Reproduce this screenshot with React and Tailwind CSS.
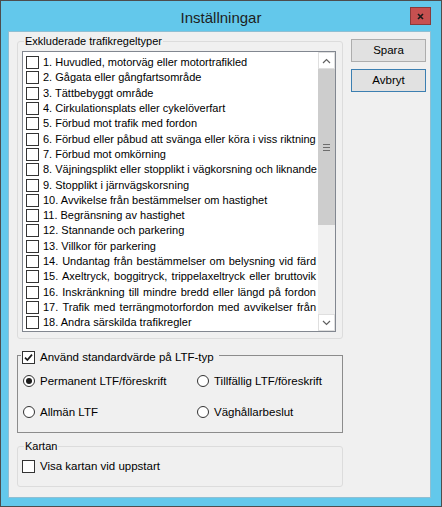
import { Fragment } from "react";

const ruleTypes = [
  { id: 1, text: "1. Huvudled, motorväg eller motortrafikled" },
  { id: 2, text: "2. Gågata eller gångfartsområde" },
  { id: 3, text: "3. Tättbebyggt område" },
  { id: 4, text: "4. Cirkulationsplats eller cykelöverfart" },
  { id: 5, text: "5. Förbud mot trafik med fordon" },
  { id: 6, text: "6. Förbud eller påbud att svänga eller köra i viss riktning" },
  { id: 7, text: "7. Förbud mot omkörning" },
  { id: 8, text: "8. Väjningsplikt eller stopplikt i vägkorsning och liknande" },
  { id: 9, text: "9. Stopplikt i järnvägskorsning" },
  { id: 10, text: "10. Avvikelse från bestämmelser om hastighet" },
  { id: 11, text: "11. Begränsning av hastighet" },
  { id: 12, text: "12. Stannande och parkering" },
  { id: 13, text: "13. Villkor för parkering" },
  { id: 14, text: "14. Undantag från bestämmelser om belysning vid färd", justify: true },
  { id: 15, text: "15. Axeltryck, boggitryck, trippelaxeltryck eller bruttovik", justify: true },
  { id: 16, text: "16. Inskränkning till mindre bredd eller längd på fordon", justify: true },
  { id: 17, text: "17. Trafik med terrängmotorfordon med avvikelser från", justify: true },
  { id: 18, text: "18. Andra särskilda trafikregler" },
];

function CheckBox({ checked = false }) {
  return (
    <span className="flex h-[13px] w-[13px] shrink-0 items-center justify-center border border-[#333333] bg-white">
      {checked && (
        <svg width="9" height="9" viewBox="0 0 9 9">
          <path d="M1 4.6 L3.4 7 L8 1.6" stroke="#1b1b1b" strokeWidth="1.7" fill="none" />
        </svg>
      )}
    </span>
  );
}

function Radio({ checked = false }) {
  return (
    <span className="flex h-[12px] w-[12px] shrink-0 items-center justify-center rounded-full border border-[#333333] bg-white">
      {checked && <span className="h-[6px] w-[6px] rounded-full bg-[#1b1b1b]" />}
    </span>
  );
}

function ScrollBar() {
  return (
    <div className="flex w-[17px] shrink-0 flex-col bg-[#f0f0f0]">
      <div className="flex h-[17px] items-center justify-center border border-[#dfdfdf] bg-white">
        <svg width="9" height="6" viewBox="0 0 9 6">
          <path d="M1 5 L4.5 1.5 L8 5" stroke="#606060" strokeWidth="1.2" fill="none" />
        </svg>
      </div>
      <div className="flex h-[156px] flex-col items-center justify-center gap-[2px] bg-[#cdcdcd]">
        <span className="h-px w-[7px] bg-[#6d6d6d]" />
        <span className="h-px w-[7px] bg-[#6d6d6d]" />
        <span className="h-px w-[7px] bg-[#6d6d6d]" />
      </div>
      <div className="flex-1" />
      <div className="flex h-[17px] items-center justify-center border border-[#dfdfdf] bg-white">
        <svg width="9" height="6" viewBox="0 0 9 6">
          <path d="M1 1 L4.5 4.5 L8 1" stroke="#606060" strokeWidth="1.2" fill="none" />
        </svg>
      </div>
    </div>
  );
}

function RuleList() {
  return (
    <div className="flex h-[281px] w-[314px] border border-[#828790] bg-white">
      <div className="flex-1 overflow-hidden pt-[3px]">
        {ruleTypes.map((rule) => (
          <div key={rule.id} className="flex h-[15.3px] items-center gap-[4px] overflow-hidden pl-[3px]">
            <CheckBox />
            {rule.justify ? (
              <span className="flex-1 overflow-hidden pr-[2px] text-justify text-[11px] leading-[15px] [text-align-last:justify]">
                {rule.text}
              </span>
            ) : (
              <span className="whitespace-nowrap text-[11px] leading-[15px]">{rule.text}</span>
            )}
          </div>
        ))}
      </div>
      <ScrollBar />
    </div>
  );
}

const ltfTypes = [
  { label: "Permanent LTF/föreskrift", checked: true },
  { label: "Tillfällig LTF/föreskrift" },
  { label: "Allmän LTF" },
  { label: "Väghållarbeslut" },
];

export default function App() {
  return (
    <div className="flex h-[507px] w-[442px] flex-col border border-[#4d4d4d] bg-[#63c8eb] font-['Liberation_Sans',Arial,sans-serif] text-black">
      <div className="relative flex h-[30px] shrink-0 items-center justify-center pt-[2px]">
        <span className="text-[15px] leading-none text-[#1e1e1e]">Inställningar</span>
        <button className="absolute right-[10px] top-[6px] flex h-[18px] w-[21px] items-center justify-center border border-[#8a3a3a] bg-[#c75050]">
          <svg width="7" height="7" viewBox="0 0 7 7">
            <path d="M1 1 L6 6 M6 1 L1 6" stroke="#1a1a1a" strokeWidth="1.6" />
          </svg>
        </button>
      </div>

      <div className="ml-[7px] mr-[10px] flex h-[467px] border border-[#8fbfd3] bg-[#f0f0f0] pl-[8px]">
        <div className="flex w-[326px] flex-col pt-[9px]">
          <div className="relative h-[298px] rounded-[3px] border border-[#dcdcdc] pl-[4px] pt-[9px]">
            <span className="absolute left-[6px] top-[-8px] bg-[#f0f0f0] px-[1px] text-[11px] leading-[14px]">
              Exkluderade trafikregeltyper
            </span>
            <RuleList />
          </div>

          <div className="relative mt-[16px] h-[78px] border border-[#8c8c8c]">
            <div className="absolute left-[3px] top-[-5px] flex items-center gap-[5px] bg-[#f0f0f0] pl-[1px] pr-[5px]">
              <CheckBox checked />
              <span className="text-[11.5px] leading-[13px]">Använd standardvärde på LTF-typ</span>
            </div>
            <div className="grid grid-cols-[174px_1fr] gap-y-[17px] pl-[5px] pt-[18px]">
              {ltfTypes.map((type) => (
                <Fragment key={type.label}>
                  <label className="flex h-[14px] items-center gap-[5px]">
                    <Radio checked={type.checked} />
                    <span className="text-[11.5px] leading-[14px]">{type.label}</span>
                  </label>
                </Fragment>
              ))}
            </div>
          </div>

          <div className="relative mt-[13px] h-[41px] rounded-[3px] border border-[#dcdcdc] pl-[4px] pt-[13px]">
            <span className="absolute left-[6px] top-[-8px] bg-[#f0f0f0] px-[1px] text-[11px] leading-[14px]">
              Kartan
            </span>
            <div className="flex h-[13px] items-center gap-[5px]">
              <CheckBox />
              <span className="text-[11.5px] leading-[13px]">Visa kartan vid uppstart</span>
            </div>
          </div>
        </div>

        <div className="ml-[8px] flex w-[75px] flex-col gap-[7px] pt-[7px]">
          <button className="h-[23px] w-[75px] border border-[#adadad] bg-[#e1e1e1] text-[11.5px] leading-none">
            Spara
          </button>
          <button className="h-[23px] w-[75px] border border-[#3c7fb1] bg-[#e1e1e1] text-[11.5px] leading-none">
            Avbryt
          </button>
        </div>
      </div>
    </div>
  );
}
